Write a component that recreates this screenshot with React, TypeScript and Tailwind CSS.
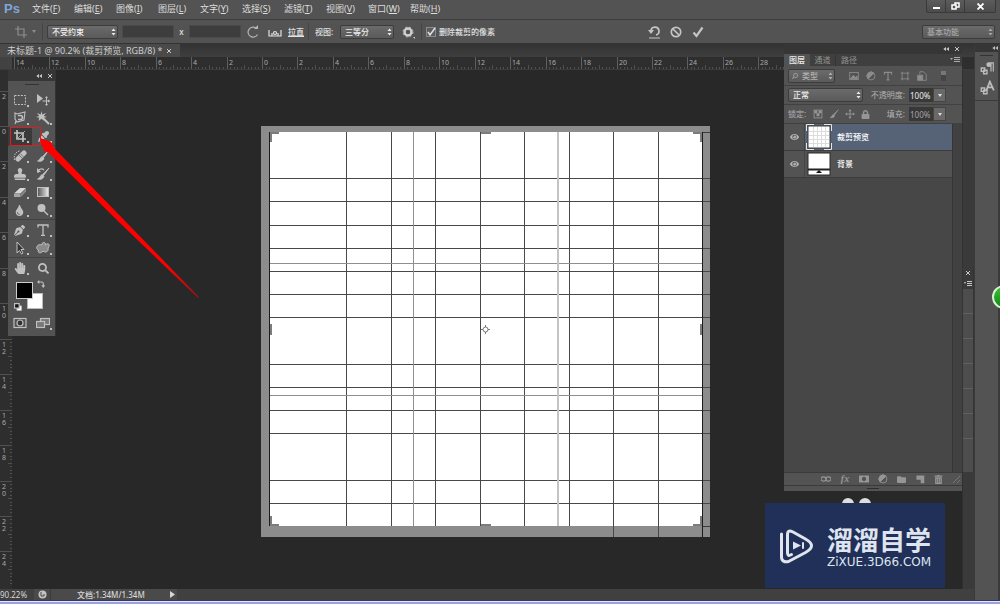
import type { ReactNode } from 'react'
import {
  FaEye,
  FaEyeDropper,
  FaFolder,
  FaHandPaper,
  FaLock,
  FaPenNib,
  FaSearch,
  FaStamp,
  FaTint,
  FaTrashAlt
} from 'react-icons/fa'

const UNIT = 35.45
const FONT = "font-['Noto_Sans','Noto_Sans_CJK_SC',sans-serif]"

const menus = [
  ['文件', 'F'],
  ['编辑', 'E'],
  ['图像', 'I'],
  ['图层', 'L'],
  ['文字', 'Y'],
  ['选择', 'S'],
  ['滤镜', 'T'],
  ['视图', 'V'],
  ['窗口', 'W'],
  ['帮助', 'H']
]

/* ---------- small shared pieces ---------- */

function Glyph({ children, size = 'size-[14px]' }: { children: ReactNode; size?: string }) {
  return (
    <svg viewBox="0 0 14 14" className={`${size} shrink-0`} fill="none" stroke="currentColor" strokeWidth="1.2" aria-hidden="true">
      {children}
    </svg>
  )
}

function UpDown() {
  return (
    <svg viewBox="0 0 5 8" className="pointer-events-none absolute right-[2px] top-1/2 h-2 w-[5px] -translate-y-1/2" fill="currentColor" aria-hidden="true">
      <path d="M.5 3 2.5.6 4.5 3zM.5 5 2.5 7.4 4.5 5z" />
    </svg>
  )
}

interface PickerProps {
  label: string
  value: string
  width: string
  tone?: string
  pad?: string
}

function Picker({ label, value, width, tone = 'text-[#eeeeee]', pad = 'pl-1' }: PickerProps) {
  return (
    <span className={`relative block h-[14px] shrink-0 ${width} ${tone}`}>
      <select
        aria-label={label}
        className={`block h-full w-full appearance-none rounded-[2px] border border-[#3c3c3c] bg-linear-to-b from-[#6b6b6b] to-[#5a5a5a] text-[8px] leading-[12px] font-medium ${pad}`}
      >
        <option>{value}</option>
      </select>
      <UpDown />
    </span>
  )
}

function Divider() {
  return <span className="h-[17px] w-px shrink-0 bg-[#454545]" />
}

function PanelControls() {
  return (
    <div className="flex items-center gap-[6px] text-[#c8c8c8]">
      <button aria-label="折叠" className="block">
        <svg viewBox="0 0 6 4" className="h-1 w-[6px]" fill="currentColor"><path d="M3 0v4L.3 2zM6 0v4L3.3 2z" /></svg>
      </button>
      <button aria-label="关闭" className="block">
        <svg viewBox="0 0 4 4" className="size-1" stroke="currentColor"><path d="M0 0l4 4M4 0L0 4" /></svg>
      </button>
    </div>
  )
}

/* ---------- top bars ---------- */

function MenuBar() {
  return (
    <header className="flex h-5 shrink-0 items-start border-b border-[#3d3d3d] bg-[#535353] text-[#dddddd]">
      <span className="w-[31px] pl-1 font-['Liberation_Sans',sans-serif] text-[13px] leading-[18px] font-bold text-[#7da7d9]">Ps</span>
      <nav className="flex text-[9px] leading-[18px]">
        {menus.map(([name, key]) => (
          <button key={key} className="w-[42px] pl-px text-left whitespace-nowrap last:w-auto">
            {name}(<u>{key}</u>)
          </button>
        ))}
      </nav>
      <div className="mr-1 ml-auto flex h-[13px] divide-x divide-[#3a3a3a] overflow-hidden rounded-b-[2px] border border-t-0 border-[#3a3a3a] bg-linear-to-b from-[#5c5c5c] to-[#4c4c4c] text-white">
        <button aria-label="最小化" className="flex w-[19px] items-center justify-center">
          <span className="mt-[3px] h-[2px] w-[7px] bg-white" />
        </button>
        <button aria-label="还原" className="flex w-[19px] items-center justify-center">
          <svg viewBox="0 0 9 8" className="h-2 w-[9px]" fill="none" stroke="currentColor" strokeWidth="1.5"><path d="M1 3h4v4H1zM4 2.5V1h4v4H5.5" /></svg>
        </button>
        <button aria-label="关闭" className="flex w-[30px] items-center justify-center">
          <svg viewBox="0 0 7 7" className="size-[7px]" stroke="currentColor" strokeWidth="1.8"><path d="M.5.5l6 6M6.5.5l-6 6" /></svg>
        </button>
      </div>
    </header>
  )
}

function OptionsBar() {
  const field = 'h-[13px] w-[52px] shrink-0 border border-[#4a4a4a] bg-[#3d3d3d] px-1 text-[8px]'
  return (
    <div className="flex h-6 shrink-0 items-center border-b border-[#333333] bg-[#535353] text-[8px] font-medium text-[#e2e2e2]">
      <button aria-label="裁剪工具" className="ml-[14px] flex items-center gap-1 text-[#8d8d8d]">
        <Glyph><path d="M4 1v9h9M1 4h9v9" /></Glyph>
        <svg viewBox="0 0 4 3" className="h-[3px] w-1" fill="currentColor"><path d="M0 0h4L2 3z" /></svg>
      </button>
      <span className="ml-[6px] flex items-center gap-1">
        <Divider />
        <Picker label="比例" value="不受约束" width="w-[71px]" />
      </span>
      <span className="ml-1 flex items-center gap-1">
        <input aria-label="宽度" className={field} />
        <span className="w-[7px] text-center">x</span>
        <input aria-label="高度" className={field} />
      </span>
      <button aria-label="旋转裁剪框" className="ml-[5px] text-[#b5b5b5]">
        <Glyph><path d="M11.5 9.5A5 5 0 1 1 10.5 3.5" /><path d="M8 4h4V0z" fill="currentColor" stroke="none" /></Glyph>
      </button>
      <button className="ml-2 flex items-center gap-[6px]">
        <Glyph><path d="M1 5v6h12V5M1 11h12M4 11V8M10 11V8" /><circle cx="7" cy="8" r="1.5" /></Glyph>
        <u>拉直</u>
      </button>
      <span className="ml-1 flex items-center gap-[6px]">
        <Divider />
        <span className="w-[19px] whitespace-nowrap">视图:</span>
        <Picker label="视图" value="三等分" width="w-[54px]" />
      </span>
      <button aria-label="其他裁剪选项" className="ml-[7px] text-[#d0d0d0]">
        <Glyph><circle cx="7" cy="7" r="3.5" strokeWidth="2.4" /><circle cx="7" cy="7" r="5" strokeWidth=".8" strokeDasharray="2 2" /><path d="M12 12h2v2z" fill="currentColor" stroke="none" /></Glyph>
      </button>
      <span className="ml-[6px] flex items-center gap-1">
        <Divider />
        <label className="flex items-center gap-[3px] whitespace-nowrap">
          <span className="relative block size-[10px]">
            <input type="checkbox" defaultChecked className="block size-[10px] appearance-none border border-[#8a8a8a] bg-[#5c5c5c]" />
            <svg viewBox="0 0 10 10" className="pointer-events-none absolute inset-0 size-[10px]" fill="none" stroke="currentColor" strokeWidth="1.5"><path d="M2 5l2 3 5-7" /></svg>
          </span>
          删除裁剪的像素
        </label>
      </span>
      <div className="ml-[152px] flex items-center gap-2 text-[#c4c4c4]">
        <button aria-label="复位"><Glyph><path d="M4 6a4 4 0 1 1 5 4" strokeWidth="1.7" /><path d="M1 5h6L4 9z" fill="currentColor" stroke="none" /><path d="M2 13h11" strokeWidth="1" /></Glyph></button>
        <button aria-label="取消"><Glyph><circle cx="7" cy="7" r="4.7" strokeWidth="1.7" /><path d="M4 4l6 6" strokeWidth="1.7" /></Glyph></button>
        <button aria-label="提交"><Glyph><path d="M2.5 7.5 5.5 11 11.5 2.5" strokeWidth="2.2" /></Glyph></button>
      </div>
      <div className="mr-[5px] ml-auto">
        <Picker label="工作区" value="基本功能" width="w-[73px]" tone="text-[#a8a8a8]" />
      </div>
    </div>
  )
}

/* ---------- document ---------- */

function TopRuler() {
  const marks = Array.from({ length: 22 }, (_, i) => i - 7)
  return (
    <svg className="h-[13px] w-full bg-[#2e2e2e]" aria-hidden="true">
      {marks.map((n) => {
        const x = Math.round(262 + n * UNIT)
        return (
          <g key={n}>
            <path d={`M${x + 0.5} 0v12`} stroke="#5e5e5e" />
            {Array.from({ length: 9 }, (_, t) => (
              <path key={t} d={`M${Math.round(262 + (n + (t + 1) / 10) * UNIT) + 0.5} ${t === 4 ? 8 : 10}V12`} stroke="#505050" />
            ))}
            <text x={x + 2} y="8" fontSize="7" fill="#a9a9a9">{Math.abs(n * 2)}</text>
          </g>
        )
      })}
      <rect width="12" height="13" fill="#424242" />
      <path d="M0 12.5H2000" stroke="#3b3b3b" />
    </svg>
  )
}

function SideRuler() {
  const marks = Array.from({ length: 14 }, (_, i) => i - 1)
  return (
    <svg className="h-full w-3 shrink-0 bg-[#2e2e2e]" aria-hidden="true">
      {marks.map((n) => {
        const y = Math.round(56 + n * UNIT)
        return (
          <g key={n}>
            <path d={`M0 ${y + 0.5}h12`} stroke="#505050" />
            {Array.from({ length: 9 }, (_, t) => (
              <path key={t} d={`M${t === 4 ? 8 : 10} ${Math.round(56 + (n + (t + 1) / 10) * UNIT) + 0.5}H12`} stroke="#505050" />
            ))}
            {n < 13 && String(Math.abs(n * 2)).split('').map((d, k) => (
              <text key={k} x="2" y={y + 8 + k * 7} fontSize="7" fill="#a9a9a9">{d}</text>
            ))}
          </g>
        )
      })}
    </svg>
  )
}

const columns = [85, 130, 174, 219, 263, 308, 352, 397]
const rows = [52, 75, 99, 122, 145, 168, 191, 238, 261, 284, 307, 354, 377]

function Artboard() {
  return (
    <svg viewBox="0 0 449 411" className="h-[411px] w-[449px] shrink-0" shapeRendering="crispEdges" aria-hidden="true">
      <rect width="449" height="411" fill="#8c8c8c" />
      <rect x="8" y="6" width="434" height="394" fill="#ffffff" />
      {columns.map((x) => (
        <rect key={x} x={x} y="6" width="1" height={x === 352 || x === 397 ? 405 : 394} fill="#484848" />
      ))}
      {rows.map((y) => (
        <rect key={y} x="8" y={y} width="441" height="1" fill="#484848" />
      ))}
      {/* thirds overlay */}
      <path d="M152.5 6v394M8 137.5h434M8 269.5h434" stroke="#8f8f8f" />
      <path d="M297 6v394" stroke="#c4c4c4" strokeWidth="2" />
      <path d="M8.5 6v394M441.5 6v405" stroke="#1c1c1c" />
      <path d="M442 6.5h7M442 400.5h7" stroke="#3a3a3a" />
      {/* crop handles */}
      <path
        d="M9 7h9M10 7v9M432 7h9M440 7v9M9 399h9M10 390v9M432 399h9M440 390v9M220 7h10M220 399h10M10 198v11M440 198v11"
        stroke="#7c7c7c"
        strokeWidth="2"
      />
      <g stroke="#777777" fill="none" shapeRendering="auto">
        <circle cx="224.5" cy="203.5" r="2.5" />
        <path d="M220 203.5h2M227 203.5h2M224.5 199v2M224.5 206v2" />
      </g>
    </svg>
  )
}

function StatusBar() {
  return (
    <footer className="flex h-[11px] shrink-0 items-center bg-[#404040] text-[8px] leading-[11px] text-[#d6d6d6]">
      <span className="w-[34px] shrink-0">90.22%</span>
      <button aria-label="同步" className="flex h-full w-4 items-center justify-center bg-[#4a4a4a] text-[#c4c4c4]">
        <svg viewBox="0 0 9 9" className="size-[9px]"><circle cx="4.5" cy="4.5" r="4" fill="currentColor" /><path d="M3 2v4h3V4" stroke="#4a4a4a" fill="none" /></svg>
      </button>
      <span className="flex h-full w-[127px] items-center justify-between border-l border-[#3a3a3a] bg-[#4a4a4a] pr-[2px] pl-[26px] font-medium">
        文档:1.34M/1.34M
        <button aria-label="状态选项">
          <svg viewBox="0 0 5 7" className="h-[7px] w-[5px]" fill="currentColor"><path d="M0 0v7l5-3.5z" /></svg>
        </button>
      </span>
    </footer>
  )
}

/* ---------- tool palette ---------- */

const brush = <path d="M13 1 7 7 8 8zM6.5 7.5C4 8 4.5 11 1.5 12c3 1 6 0 6.5-3z" fill="currentColor" stroke="currentColor" strokeWidth=".8" />

interface Tool {
  name: string
  icon: ReactNode
  plain?: boolean
  active?: boolean
}

const toolGroups: Tool[][] = [
  [
    { name: '矩形选框', icon: <Glyph><rect x="1.5" y="2.5" width="11" height="9" strokeDasharray="2 1.2" strokeWidth="1" /></Glyph> },
    { name: '移动', plain: true, icon: <Glyph><path d="M1 1v9l6-4.5z" fill="currentColor" stroke="none" /><path d="M10.5 4v8M6.5 8h8" strokeWidth="1" /><path d="M10.5 3l1.5 2H9zM10.5 13l1.5-2H9zM14 8l-2-1.5v3z" fill="currentColor" stroke="none" /></Glyph> },
    { name: '磁性套索', icon: <Glyph><path d="M2 2l2 1 8-2-1 8-7 2-2-3zM3 10l-1 3" strokeWidth="1.1" /><path d="M5 4.5h2.5a2 2 0 0 1 0 4H5" strokeWidth="1.6" /></Glyph> },
    { name: '魔棒', icon: <Glyph><path d="M7 7l6 6" strokeWidth="2" /><path d="M5.5 0l.8 3.5L10 2 7.8 5l3.2 1-3.3.8L8.5 10 5.5 7.8 2.5 10l.8-3.2L0 6l3.3-1L1 2l3.7 1.5z" fill="currentColor" stroke="none" /></Glyph> },
    { name: '裁剪', active: true, icon: <Glyph><path d="M4 1v9h9M1 4h9v9" strokeWidth="1.7" /><path d="M5 9l7-7" strokeWidth=".8" /></Glyph> },
    { name: '吸管', icon: <FaEyeDropper className="size-[11px]" /> }
  ],
  [
    { name: '污点修复', icon: <Glyph><path d="M5 10l6-6" strokeWidth="5" strokeLinecap="round" /><path d="M1.5 11c-1-5 1-8 5-9" strokeDasharray="1.5 1" strokeWidth="1" /><path d="M6 6l3 3M7.5 4.8l3 3" stroke="#5e5e5e" strokeWidth=".8" /></Glyph> },
    { name: '画笔', icon: <Glyph>{brush}</Glyph> },
    { name: '仿制图章', icon: <FaStamp className="size-3" /> },
    { name: '历史记录画笔', icon: <Glyph>{brush}<path d="M2 6a3.5 3.5 0 0 1 6-3" /><path d="M1 1v4h4z" fill="currentColor" stroke="none" /></Glyph> },
    { name: '橡皮擦', icon: <Glyph><path d="M1 8.5 7 3h6L7.5 8.5z" fill="#d8d8d8" stroke="none" /><path d="M1 9h6.5v3H1z" fill="#a6a6a6" stroke="none" /><path d="M8 9l5-5.5v3L8 12z" fill="#8a8a8a" stroke="none" /></Glyph> },
    { name: '渐变', icon: <Glyph><defs><linearGradient id="fade"><stop offset="0" stopColor="#555555" /><stop offset="1" stopColor="#eeeeee" /></linearGradient></defs><rect x="1.5" y="2.5" width="11" height="9" fill="url(#fade)" strokeWidth="1" /></Glyph> },
    { name: '模糊', icon: <FaTint className="size-[11px]" /> },
    { name: '减淡', icon: <Glyph><circle cx="5.5" cy="5" r="4" fill="currentColor" stroke="none" /><path d="M8 8l4 4" strokeWidth="1.5" /></Glyph> }
  ],
  [
    { name: '钢笔', icon: <FaPenNib className="size-[11px]" /> },
    { name: '文字', icon: <Glyph><path d="M2 4.5V2h10v2.5M7 2v10M5 12.4h4" strokeWidth="1.3" /></Glyph> },
    { name: '路径选择', icon: <Glyph><path d="M4 1v11l2.5-2.5L8.5 13l1.5-1-2-3.5h3z" fill="#333333" strokeWidth="1" /></Glyph> },
    { name: '自定形状', icon: <Glyph><path d="M6 4c0-4 4-3 3.5 0 3-3 5 0 2.5 3 1 4-3 5-5 3-2 3-6 2-4.5-1C-1 8 1 2 6 4z" fill="#8a8a8a" strokeWidth="1" /></Glyph> }
  ],
  [
    { name: '抓手', icon: <FaHandPaper className="size-3" /> },
    { name: '缩放', plain: true, icon: <FaSearch className="size-[11px]" /> }
  ]
]

function ToolButton({ name, icon, plain, active }: Tool) {
  return (
    <button aria-label={name} className={`relative flex h-[18px] items-center justify-center ${active ? 'bg-[#3a3a3a]' : ''}`}>
      {icon}
      {!plain && <span className="absolute right-[3px] bottom-[2px] size-[2px] bg-[#c0c0c0]" />}
    </button>
  )
}

function ToolPalette() {
  return (
    <aside className="absolute top-[26px] left-2 w-12 border-r border-[#333333] bg-[#535353] text-[#c0c0c0]">
      <div className="flex h-[11px] items-center justify-end bg-[#363636] pr-[3px]">
        <PanelControls />
      </div>
      <div className="flex h-[10px] justify-center pt-[3px]">
        <span className="h-px w-[14px] bg-[#333333]" />
      </div>
      <div className="divide-y divide-[#424242]">
        {toolGroups.map((group, i) => (
          <div key={i} className="grid grid-cols-2 pt-px first:pt-0">
            {group.map((tool) => <ToolButton key={tool.name} {...tool} />)}
          </div>
        ))}
      </div>
      <div className="relative mt-[3px] h-[34px]">
        <button aria-label="背景色" className="absolute top-[13px] left-[19px] size-4 border border-[#bbbbbb] bg-white" />
        <button aria-label="前景色" className="absolute top-[2px] left-2 size-[17px] border border-[#cccccc] bg-black" />
        <button aria-label="切换颜色" className="absolute top-0 left-[29px]">
          <Glyph size="size-2"><path d="M3 3.5h5c2 0 3 1 3 3v4" strokeWidth="2" /><path d="M4 0v7L0 3.5zM7.5 9h7L11 14z" fill="currentColor" stroke="none" /></Glyph>
        </button>
        <button aria-label="默认颜色" className="absolute top-[23px] left-[6px]">
          <Glyph size="size-2"><path d="M5 5h8v8H5z" fill="#ffffff" /><path d="M1 1h8v8H1z" fill="#111111" strokeWidth="2" /></Glyph>
        </button>
      </div>
      <div className="grid h-[22px] grid-cols-2 items-start">
        <ToolButton name="快速蒙版" plain icon={<Glyph><rect x="1" y="2.5" width="12" height="9" /><circle cx="7" cy="7" r="3" fill="#333333" /></Glyph>} />
        <ToolButton name="屏幕模式" icon={<Glyph><rect x="4.5" y="2.5" width="9" height="6" fill="#777777" /><rect x=".5" y="5.5" width="8" height="6" fill="#777777" /></Glyph>} />
      </div>
      {/* highlight round the crop tool */}
      <div className="pointer-events-none absolute top-[57px] left-[2px] h-[19px] w-[31px] border border-[#e01c20]" />
    </aside>
  )
}

/* ---------- layers panel ---------- */

function Percent({ label, active }: { label: string; active?: boolean }) {
  return (
    <div className="ml-auto flex items-center">
      <label className="flex items-center gap-1 whitespace-nowrap text-[#b4b4b4]">
        {label}:
        <input defaultValue="100%" className={`h-[14px] w-6 bg-[#383838] px-px text-[8px] ${active ? 'text-[#eeeeee]' : 'text-[#a4a4a4]'}`} />
      </label>
      <button aria-label={`${label}选项`} className="flex h-[14px] w-[13px] items-center justify-center border border-[#454545] bg-[#696969] text-[#dddddd]">
        <svg viewBox="0 0 4 3" className="h-[3px] w-1" fill="currentColor"><path d="M0 0h4L2 3z" /></svg>
      </button>
    </div>
  )
}

function LayerRow({ name, active, children }: { name: string; active?: boolean; children: ReactNode }) {
  return (
    <li className={`flex h-[27px] items-center border-b border-[#3c3c3c] ${active ? 'bg-[#566377]' : 'bg-[#535353]'}`}>
      <button aria-label={`显示${name}`} className="flex h-full w-[21px] items-center justify-center border-r border-[#454545] bg-[#535353] text-[#b4b4b4]">
        <FaEye className="h-2 w-[9px]" />
      </button>
      <svg viewBox="0 0 26 26" className="ml-px size-[26px]" aria-hidden="true">{children}</svg>
      <span className="ml-[5px] text-[8px] font-medium text-white">{name}</span>
    </li>
  )
}

function LayersPanel() {
  return (
    <aside className="absolute top-0 right-[38px] flex h-[447px] w-[178px] flex-col bg-[#535353] text-[8px] text-[#c0c0c0]">
      <div className="flex h-[10px] shrink-0 items-center justify-end bg-[#363636] pr-[3px]"><PanelControls /></div>
      <div className="flex h-3 shrink-0 items-center bg-[#3f3f3f] text-[#929292]">
        <button className="h-full w-[26px] bg-[#535353] font-medium text-[#eeeeee]">图层</button>
        <button className="h-full w-[26px] border-r border-[#353535]">通道</button>
        <button className="h-full w-[26px]">路径</button>
        <button aria-label="面板菜单" className="mr-[2px] ml-auto text-[#aaaaaa]">
          <svg viewBox="0 0 10 6" className="h-[6px] w-[10px]"><path d="M0 1h3L1.5 3z" fill="currentColor" /><path d="M4 .5h6M4 2.5h6M4 4.5h6" stroke="currentColor" strokeWidth="1" /></svg>
        </button>
      </div>

      <div className="flex h-5 shrink-0 items-center border-b border-[#414141] pl-1">
        <span className="relative text-[#9c9c9c]">
          <Picker label="滤镜类型" value="类型" width="w-[47px]" tone="text-[#b0b0b0]" pad="pl-[13px]" />
          <FaSearch className="pointer-events-none absolute top-1 left-1 size-[6px] -scale-x-100" />
        </span>
        <div className="ml-[14px] flex gap-[7px] text-[#8c8c8c]">
          <button aria-label="像素图层"><Glyph size="size-[10px]"><rect x="1" y="2" width="12" height="10" /><path d="M2 11l4-5 3 3 2-2 1 4z" fill="currentColor" /></Glyph></button>
          <button aria-label="调整图层"><Glyph size="size-[10px]"><circle cx="7" cy="7" r="5.5" /><path d="M11 3a5.5 5.5 0 1 0-8 8z" fill="currentColor" /></Glyph></button>
          <button aria-label="文字图层"><Glyph size="size-[10px]"><path d="M2 5V2h10v3M7 2v11M5 12.5h4" strokeWidth="1.6" /></Glyph></button>
          <button aria-label="形状图层"><Glyph size="size-[10px]"><path d="M3 1v12M11 1v12M1 3h12M1 11h12" /></Glyph></button>
          <button aria-label="智能对象"><Glyph size="size-[10px]"><path d="M4 5V1h5l4 4v8H8" /><rect x="1" y="6" width="7" height="7" fill="currentColor" /></Glyph></button>
        </div>
        <button aria-label="滤镜开关" className="mr-4 ml-auto h-[10px] w-[5px] border-t-4 border-[#777777] bg-[#454545]" />
      </div>

      <div className="flex h-[19px] shrink-0 items-center border-b border-[#414141] pr-4 pl-1">
        <Picker label="混合模式" value="正常" width="w-[75px]" />
        <Percent label="不透明度" active />
      </div>

      <div className="flex h-[19px] shrink-0 items-center border-b border-[#414141] pr-4 pl-1">
        <span className="w-[25px] text-[#b4b4b4]">锁定:</span>
        <div className="flex gap-[6px] text-[#969696]">
          <button aria-label="锁定透明像素"><Glyph size="size-[10px]"><rect x="1.5" y="1.5" width="11" height="11" /><path d="M2 2h4v4H2zM8 2h4v4H8zM5 6h4v4H5z" fill="currentColor" stroke="none" /></Glyph></button>
          <button aria-label="锁定图像像素"><Glyph size="size-[10px]">{brush}</Glyph></button>
          <button aria-label="锁定位置"><Glyph size="size-[10px]"><path d="M7 2v10M2 7h10" /><path d="M7 0l2 3H5zM7 14l2-3H5zM0 7l3-2v4zM14 7l-3-2v4z" fill="currentColor" stroke="none" /></Glyph></button>
          <button aria-label="锁定全部"><FaLock className="size-[9px]" /></button>
        </div>
        <Percent label="填充" />
      </div>

      <div className="flex min-h-0 flex-1">
        <ul className="flex-1 bg-[#474747]">
          <LayerRow name="裁剪预览" active>
            <rect x="2" y="2" width="22" height="22" fill="#ffffff" stroke="#3a3a3a" />
            <path d="M7.5 3v20M11.5 3v20M15.5 3v20M19.5 3v20M3 7.5h20M3 11.5h20M3 15.5h20M3 19.5h20" stroke="#dcdcdc" />
            <path d="M.5 7V.5H8M18 .5h7.5V7M25.5 19v6.5H18M8 25.5H.5V19" fill="none" stroke="#e6e6e6" />
          </LayerRow>
          <LayerRow name="背景">
            <rect x="2" y="2" width="22" height="22" fill="#ffffff" stroke="#2b2b2b" />
            <path d="M2 18.5h22" stroke="#222222" strokeWidth="2" />
            <path d="M10 22h6l-3-3z" fill="#111111" />
          </LayerRow>
        </ul>
        <div className="w-[10px] border-l border-[#353535] bg-[#414141]" />
      </div>

      <div className="flex h-[14px] shrink-0 items-center justify-end gap-[9px] border-t border-b border-[#3a3a3a] pr-[2px] text-[#969696]">
        <button aria-label="链接图层"><Glyph size="size-[10px]"><rect x="0" y="4" width="7" height="6" rx="3" strokeWidth="1.5" /><rect x="7" y="4" width="7" height="6" rx="3" strokeWidth="1.5" /></Glyph></button>
        <button aria-label="图层样式" className="w-[10px] font-['Liberation_Serif',serif] text-[10px] leading-[10px] font-bold italic">fx</button>
        <button aria-label="图层蒙版"><Glyph size="size-[10px]"><path d="M0 2h14v10H0zM7 4a3 3 0 1 0 .01 0z" fill="currentColor" fillRule="evenodd" stroke="none" /></Glyph></button>
        <button aria-label="新建调整图层"><Glyph size="size-[10px]"><circle cx="7" cy="7" r="5.5" /><path d="M11 3a5.5 5.5 0 1 0-8 8z" fill="currentColor" /></Glyph></button>
        <button aria-label="新建组"><FaFolder className="size-[9px]" /></button>
        <button aria-label="新建图层"><Glyph size="size-[10px]"><path d="M2 2h11v11H8V8H2z" fill="currentColor" stroke="none" /></Glyph></button>
        <button aria-label="删除图层"><FaTrashAlt className="size-[9px]" /></button>
        <svg viewBox="0 0 8 8" className="size-2" stroke="#777777" aria-hidden="true"><path d="M1 8l7-7M5 8l3-3" /></svg>
      </div>
      <div className="flex h-[5px] shrink-0 items-center justify-center"><span className="h-px w-3 bg-[#2e2e2e]" /></div>
    </aside>
  )
}

/* Edge of the panel stacked behind the layers panel */
function HiddenPanel() {
  return (
    <aside className="absolute top-[224px] right-[26px] h-[204px] w-3 border-x border-[#343434] bg-[#4d4d4d] text-[#c8c8c8]">
      <div className="flex h-[21px] flex-col items-center justify-around bg-[#3a3a3a]">
        <button aria-label="关闭面板"><svg viewBox="0 0 4 4" className="size-1" stroke="currentColor"><path d="M0 0l4 4M4 0L0 4" /></svg></button>
        <button aria-label="面板选项"><svg viewBox="0 0 8 5" className="h-[5px] w-2"><path d="M0 1h2L1 3z" fill="currentColor" /><path d="M3 .5h5M3 2.5h5M3 4.5h5" stroke="currentColor" /></svg></button>
      </div>
      <div className="flex flex-col gap-6 pt-6">
        {[0, 1, 2, 3, 4, 5].map((n) => <span key={n} className="h-px bg-[#606060]" />)}
      </div>
    </aside>
  )
}

function Dock() {
  return (
    <aside className="flex w-[26px] shrink-0 flex-col border-r-2 border-l border-[#3a3a3a] bg-[#535353] text-[#bcbcbc]">
      <div className="flex h-2 items-center justify-end bg-[#363636]">
        <button aria-label="展开面板">
          <svg viewBox="0 0 6 4" className="h-1 w-[6px]" fill="currentColor"><path d="M3 0v4L.3 2zM6 0v4L3.3 2z" /></svg>
        </button>
      </div>
      <div className="flex flex-col items-center gap-1 border-b border-[#3a3a3a] pt-[3px] pb-1">
        <span className="h-px w-[13px] bg-[#333333]" />
        <button aria-label="段落样式">
          <Glyph size="size-4"><path d="M8 2h5v8h-1V3h-1v7h-1V6H9a2 2 0 0 1-1-4z" fill="currentColor" stroke="none" /><path d="M2 7h3v3H2zM4 9h3v3H4z" /></Glyph>
        </button>
        <button aria-label="字符样式">
          <Glyph size="size-4"><path d="M6.5 9 9.5 1.5 13 9M8 6.5h4" strokeWidth="1.6" /><path d="M2 7h3v3H2zM4 9h3v3H4z" /></Glyph>
        </button>
      </div>
    </aside>
  )
}

/* ---------- overlays ---------- */

function Watermark() {
  return (
    <div className="absolute right-[55px] bottom-3 flex h-[85px] w-[180px] items-center bg-[#203058] pl-[14px] text-[#dfe4ee]">
      <svg viewBox="0 0 36 36" className="size-9 shrink-0" fill="none" stroke="currentColor" strokeWidth="3" strokeLinecap="round" strokeLinejoin="round" aria-hidden="true">
        <path d="M2.5 6v23c0 4 3 5.5 7 4.5l17-9c8-4.5 8-9 0-13.5L14 4C10 2 8.5 3 8.5 7v17c0 4 1.5 4 4 2.5" />
        <path d="M14 13.5v8l8-4z" fill="currentColor" stroke="none" />
        <path d="M24 15v5" strokeWidth="2" />
      </svg>
      <div className="ml-3 whitespace-nowrap">
        <p className="font-['Noto_Sans_CJK_SC',sans-serif] text-[26px] leading-[32px] font-bold">溜溜自学</p>
        <p className="font-['DejaVu_Sans',sans-serif] text-[12px] leading-[14px]">ZiXUE.3D66.COM</p>
      </div>
    </div>
  )
}

function Pointer() {
  return (
    <svg viewBox="0 0 164 166" className="pointer-events-none absolute top-[90px] left-9 h-[166px] w-[164px]" aria-hidden="true">
      <defs>
        <linearGradient id="tail" x1="0" y1="0" x2="1" y2="1">
          <stop offset=".8" stopColor="#ff0000" />
          <stop offset="1" stopColor="#ff0000" stopOpacity=".5" />
        </linearGradient>
      </defs>
      <path d="M4 4 15 8 18 14 90 88 163 163 162 164 86 91 13 19 8 17z" fill="url(#tail)" />
    </svg>
  )
}

export default function App() {
  return (
    <div className={`flex h-screen flex-col overflow-hidden bg-[#282828] ${FONT}`}>
      <MenuBar />
      <OptionsBar />
      <div className="relative flex min-h-0 flex-1 overflow-hidden">
        <main className="flex min-w-0 flex-1 flex-col">
          <div className="flex h-[13px] shrink-0 bg-linear-to-b from-[#333333] to-[#3e3e3e]">
            <div className="flex w-[180px] items-center gap-[5px] bg-[#4a4a4a] pl-[7px] text-[9px] leading-[13px] whitespace-nowrap text-[#cfcfcf]">
              未标题-1 @ 90.2% (裁剪预览, RGB/8) *
              <button aria-label="关闭文档"><svg viewBox="0 0 4 4" className="size-1" stroke="currentColor"><path d="M0 0l4 4M4 0L0 4" /></svg></button>
            </div>
          </div>
          <TopRuler />
          <div className="flex min-h-0 flex-1">
            <SideRuler />
            <div className="flex min-w-0 flex-1 items-start justify-center overflow-hidden bg-[#282828] pt-14 pr-[3px]">
              <Artboard />
            </div>
            <div className="w-3 shrink-0 border-l border-[#303030] bg-[#3a3a3a]" />
          </div>
          <StatusBar />
        </main>
        <Dock />
        <HiddenPanel />
        <LayersPanel />
        <ToolPalette />
        <Pointer />
        <div className="absolute right-[129px] bottom-[90px] flex gap-[5px]">
          <span className="size-3 rounded-full bg-[#dedede]" />
          <span className="size-3 rounded-full bg-[#dedede]" />
        </div>
        <Watermark />
        <button aria-label="加速球" className="absolute top-[241px] -right-4 size-6 rounded-full border-2 border-[#d8f0d4] bg-linear-to-b from-[#39c431] to-[#0c8a12]" />
      </div>
      <div className="h-1 shrink-0 border-t border-b-2 border-t-[#34386a] border-b-[#9ba0dc] bg-[#e4e6fa]" />
    </div>
  )
}
